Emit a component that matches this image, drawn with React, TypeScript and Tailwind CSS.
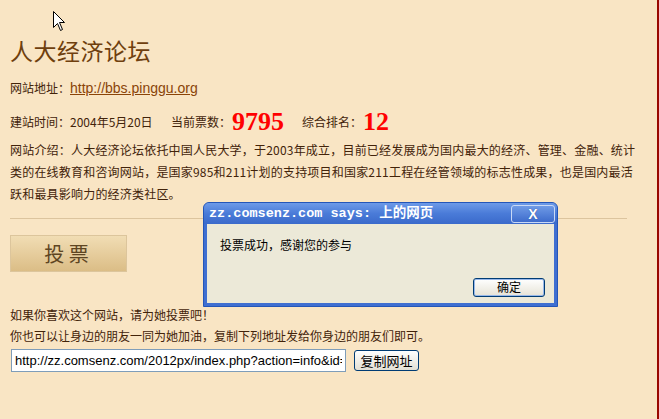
import React from 'react';

const cjk = { fontFamily: '"Noto Sans CJK SC", "Liberation Sans", sans-serif' };

// 页面上的鼠标指针
function Cursor() {
    return (
        <svg className="absolute left-[53px] top-[11px]" width="13" height="21" viewBox="0 0 13 21">
            <path d="M0.5 0.5 L0.5 16.5 L4.5 12.5 L7.5 19.5 L9.5 18.5 L6.5 11.5 L11.5 11.5 Z" fill="#fff" stroke="#000" strokeWidth="1" />
        </svg>
    );
}

function AlertDialog() {
    return (
        <div className="absolute left-[203px] top-[202px] w-[355px] h-[105px] rounded-t-[6px] bg-[#3f6fd1] border border-[#2456b8] flex flex-col">
            {/* 标题栏 */}
            <div className="h-[21px] flex items-center justify-between pl-[5px] pr-[2px] bg-gradient-to-b from-[#6d9ae8] via-[#4a7bd8] to-[#3a6acb] rounded-t-[5px]">
                <span
                    className="text-white font-bold text-[13.5px] leading-none whitespace-nowrap"
                    style={{ fontFamily: '"Liberation Mono", "Noto Sans CJK SC", monospace' }}
                >
                    zz.comsenz.com says: 上的网页
                </span>
                <span className="w-[44px] h-[18px] rounded-[3px] border border-[#c9d9f6] bg-gradient-to-b from-[#6f9ae6] to-[#3e6ccc] flex items-center justify-center text-white font-bold text-[14px] leading-none"
                    style={{ fontFamily: '"Liberation Sans", sans-serif', textShadow: '0 0 1px #1d3d8a' }}
                >
                    X
                </span>
            </div>
            {/* 内容 */}
            <div className="flex-1 mx-[3px] mb-[3px] bg-[#ece9d8] flex flex-col">
                <div className="pl-[13px] pt-[13px] text-[12px] leading-[16px] text-black" style={cjk}>
                    投票成功，感谢您的参与
                </div>
                <div className="mt-auto mb-[6px] self-end mr-[9px]">
                    <button className="w-[72px] h-[19px] rounded-[3px] border border-[#003c74] bg-gradient-to-b from-white to-[#e6e3d6] shadow-[inset_0_0_0_1px_#98b8ea] text-[12px] leading-none text-black" style={cjk}>
                        确定
                    </button>
                </div>
            </div>
        </div>
    );
}

export default function App() {
    return (
        <div className="relative w-[659px] h-[419px] bg-[#f9e5c4] border-r-2 border-[#990800] overflow-hidden text-[#42230a]" style={cjk}>
            <div className="pl-[10px] pt-[36px] flex flex-col items-start">
                {/* 标题 */}
                <div className="h-[28px] leading-[28px] text-[23px] text-[#6f3f0e] tracking-[0.5px]">人大经济论坛</div>

                {/* 网站地址 */}
                <div className="mt-[14px] h-[20px] leading-[20px] text-[12px] whitespace-nowrap">
                    网站地址：
                    <a href="#" className="underline text-[#8a4408] text-[14px]" style={{ fontFamily: '"Liberation Sans", sans-serif' }}>
                        http://bbs.pinggu.org
                    </a>
                </div>

                {/* 建站时间 / 票数 / 排名 */}
                <div className="mt-[9px] h-[30px] flex items-center text-[12px] whitespace-nowrap">
                    <span className="w-[161px]">建站时间：2004年5月20日</span>
                    <span className="w-[61px]">当前票数：</span>
                    <span className="w-[70px] text-[#ff0000] font-bold text-[26px] leading-none" style={{ fontFamily: '"Liberation Serif", serif' }}>9795</span>
                    <span className="w-[61px]">综合排名：</span>
                    <span className="text-[#ff0000] font-bold text-[26px] leading-none" style={{ fontFamily: '"Liberation Serif", serif' }}>12</span>
                </div>

                {/* 网站介绍 */}
                <div className="mt-[2px] text-[12px] leading-[22px] whitespace-nowrap tracking-[0.2px]">
                    网站介绍：人大经济论坛依托中国人民大学，于2003年成立，目前已经发展成为国内最大的经济、管理、金融、统计<br />
                    类的在线教育和咨询网站，是国家985和211计划的支持项目和国家211工程在经管领域的标志性成果，也是国内最活<br />
                    跃和最具影响力的经济类社区。
                </div>

                <div className="mt-[13px] w-[617px] h-px bg-[#dcc49e]" />

                {/* 投票按钮 */}
                <button className="mt-[16px] w-[117px] h-[37px] pr-[4px] border border-[#dcc59c] bg-gradient-to-b from-[#f1ddb4] to-[#dbbd86] text-[20px] leading-none text-[#5e4522]">
                    投 票
                </button>

                <div className="mt-[32px] text-[12px] leading-[21px]">如果你喜欢这个网站，请为她投票吧！</div>
                <div className="text-[12px] leading-[21px]">你也可以让身边的朋友一同为她加油，复制下列地址发给你身边的朋友们即可。</div>

                <div className="mt-[3px] ml-px flex items-center gap-[8px]">
                    <input
                        readOnly
                        value="http://zz.comsenz.com/2012px/index.php?action=info&id=33"
                        className="w-[335px] h-[23px] border border-[#7f9db9] bg-white px-[3px] text-[13px] text-black outline-none"
                        style={{ fontFamily: '"Liberation Sans", sans-serif' }}
                    />
                    <button className="w-[65px] h-[21px] rounded-[3px] border border-[#003c74] bg-gradient-to-b from-white to-[#e3e0d4] text-[13px] leading-none text-black">
                        复制网址
                    </button>
                </div>
            </div>

            <AlertDialog />
            <Cursor />
        </div>
    );
}
